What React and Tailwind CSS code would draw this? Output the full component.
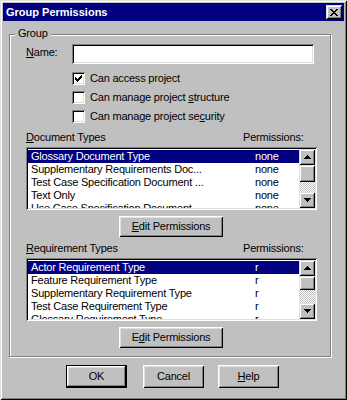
import React from "react";

const sunken =
  "shadow-[inset_1px_1px_0_0_#808080,inset_-1px_-1px_0_0_#ffffff,inset_2px_2px_0_0_#000000,inset_-2px_-2px_0_0_#dfdfdf]";
const raisedBtn =
  "shadow-[inset_1px_1px_0_0_#ffffff,inset_-1px_-1px_0_0_#000000,inset_2px_2px_0_0_#dfdfdf,inset_-2px_-2px_0_0_#808080]";
const raisedSB =
  "shadow-[inset_1px_1px_0_0_#dfdfdf,inset_-1px_-1px_0_0_#000000,inset_2px_2px_0_0_#ffffff,inset_-2px_-2px_0_0_#808080]";

function ScrollBtn({ dir }) {
  return (
    <div className={"w-[16px] h-[16px] shrink-0 bg-[#c0c0c0] flex items-center justify-center " + raisedSB}>
      <svg width="7" height="4" viewBox="0 0 7 4" shapeRendering="crispEdges" className="block">
        {dir === "up" ? (
          <path d="M3 0h1v1h-1zM2 1h3v1h-3zM1 2h5v1h-5zM0 3h7v1h-7z" fill="#000" />
        ) : (
          <path d="M0 0h7v1h-7zM1 1h5v1h-5zM2 2h3v1h-3zM3 3h1v1h-1z" fill="#000" />
        )}
      </svg>
    </div>
  );
}

function List({ items, thumbClass }) {
  return (
    <div className={"w-[291px] h-[63px] bg-white p-[2px] flex shrink-0 " + sunken}>
      <div className="flex-1 pt-[1px] overflow-hidden">
        {items.map((it, i) => (
          <div
            key={i}
            className={
              "flex h-[13px] leading-[13px] pl-[3px] whitespace-nowrap " +
              (i === 0 ? "bg-[#000080] text-white" : "text-black")
            }
          >
            <span className="w-[224px] shrink-0 overflow-hidden">{it[0]}</span>
            <span>{it[1]}</span>
          </div>
        ))}
      </div>
      <div className="w-[16px] flex flex-col">
        <ScrollBtn dir="up" />
        <div className={"w-[16px] shrink-0 bg-[#c0c0c0] " + thumbClass + " " + raisedSB} />
        <div className="flex-1 bg-[image:repeating-conic-gradient(#c0c0c0_0_25%,#ffffff_0_50%)] bg-[length:2px_2px]" />
        <ScrollBtn dir="down" />
      </div>
    </div>
  );
}

function Check({ checked, children }) {
  return (
    <div className="flex items-center gap-[5px] h-[13px]">
      <div className={"w-[13px] h-[13px] bg-white flex items-center justify-center " + sunken}>
        {checked && (
          <svg width="7" height="7" viewBox="0 0 7 7" shapeRendering="crispEdges" className="block">
            <path
              d="M6 0h1v1h-1zM5 1h2v1h-2zM0 2h1v1h-1zM4 2h3v1h-3zM0 3h2v1h-2zM3 3h3v1h-3zM0 4h5v1h-5zM1 5h3v1h-3zM2 6h1v1h-1z"
              fill="#000"
            />
          </svg>
        )}
      </div>
      <span className="leading-[13px]">{children}</span>
    </div>
  );
}

function EditBtn({ children, mt }) {
  return (
    <div
      className={
        "w-[104px] h-[21px] ml-[93px] bg-[#c0c0c0] flex items-center justify-center leading-[13px] shrink-0 " +
        mt +
        " " +
        raisedBtn
      }
    >
      {children}
    </div>
  );
}

export default function App() {
  const docs = [
    ["Glossary Document Type", "none"],
    ["Supplementary Requirements Doc...", "none"],
    ["Test Case Specification Document ...", "none"],
    ["Text Only", "none"],
    ["Use Case Specification Document", "none"],
  ];
  const reqs = [
    ["Actor Requirement Type", "r"],
    ["Feature Requirement Type", "r"],
    ["Supplementary Requirement Type", "r"],
    ["Test Case Requirement Type", "r"],
    ["Glossary Requirement Type", "r"],
  ];
  return (
    <div className="w-[347px] h-[400px] bg-[#c0c0c0] p-[3px] flex flex-col text-[11px] text-black tracking-[-0.2px] font-['Liberation_Sans',Arial,sans-serif] shadow-[inset_1px_1px_0_0_#dfdfdf,inset_-1px_-1px_0_0_#000000,inset_2px_2px_0_0_#ffffff,inset_-2px_-2px_0_0_#808080]">
      {/* Title bar */}
      <div className="h-[18px] bg-[#000080] flex items-center justify-between pl-[3px] pr-[2px] shrink-0">
        <span className="text-white font-bold leading-[13px] tracking-[0px]">Group Permissions</span>
        <div className={"w-[16px] h-[14px] bg-[#c0c0c0] flex items-center justify-center " + raisedSB}>
          <svg width="8" height="7" viewBox="0 0 8 7" shapeRendering="crispEdges" className="block">
            <path
              d="M0 0h2v1h-2zM6 0h2v1h-2zM1 1h2v1h-2zM5 1h2v1h-2zM2 2h4v1h-4zM3 3h2v1h-2zM2 4h4v1h-4zM1 5h2v1h-2zM5 5h2v1h-2zM0 6h2v1h-2zM6 6h2v1h-2z"
              fill="#000"
            />
          </svg>
        </div>
      </div>

      {/* Group box */}
      <div className="relative mt-[13px] ml-[6px] w-[322px] h-[323px] shrink-0 border border-[#808080] shadow-[inset_1px_1px_0_0_#ffffff,1px_1px_0_0_#ffffff] flex flex-col pl-[16px] pt-[9px]">
        <span className="absolute left-[5px] top-[-8px] px-[3px] bg-[#c0c0c0] leading-[13px]">Group</span>

        <div className="flex h-[20px] shrink-0">
          <span className="w-[46px] leading-[13px] mt-[2px]">
            <u>N</u>ame:
          </span>
          <div className={"w-[242px] h-[20px] bg-white " + sunken} />
        </div>

        <div className="flex flex-col gap-[6px] mt-[8px] pl-[46px] shrink-0">
          <Check checked>Can access project</Check>
          <Check>
            Can manage project <u>s</u>tructure
          </Check>
          <Check>
            Can manage project se<u>c</u>urity
          </Check>
        </div>

        <div className="flex h-[13px] leading-[13px] mt-[8px] shrink-0">
          <span className="w-[217px]">
            <u>D</u>ocument Types
          </span>
          <span>Permissions:</span>
        </div>
        <div className="mt-[3px]">
          <List items={docs} thumbClass="h-[17px]" />
        </div>
        <EditBtn mt="mt-[6px]">
          <span>
            <u>E</u>dit Permissions
          </span>
        </EditBtn>

        <div className="flex h-[13px] leading-[13px] mt-[5px] shrink-0">
          <span className="w-[217px]">
            <u>R</u>equirement Types
          </span>
          <span>Permissions:</span>
        </div>
        <div className="mt-[3px]">
          <List items={reqs} thumbClass="h-[14px]" />
        </div>
        <EditBtn mt="mt-[6px]">
          <span>
            E<u>d</u>it Permissions
          </span>
        </EditBtn>
      </div>

      {/* Bottom buttons */}
      <div className="flex mt-[8px] ml-[63px] shrink-0">
        <div className="w-[61px] h-[23px] border border-black bg-[#c0c0c0] flex items-center justify-center leading-[13px] shadow-[inset_-1px_-1px_0_0_#000000,inset_1px_1px_0_0_#ffffff,inset_-2px_-2px_0_0_#808080,inset_2px_2px_0_0_#dfdfdf]">
          OK
        </div>
        <div className={"w-[61px] h-[23px] ml-[16px] bg-[#c0c0c0] flex items-center justify-center leading-[13px] " + raisedBtn}>
          Cancel
        </div>
        <div className={"w-[61px] h-[23px] ml-[14px] bg-[#c0c0c0] flex items-center justify-center leading-[13px] " + raisedBtn}>
          <span>
            <u>H</u>elp
          </span>
        </div>
      </div>
    </div>
  );
}
